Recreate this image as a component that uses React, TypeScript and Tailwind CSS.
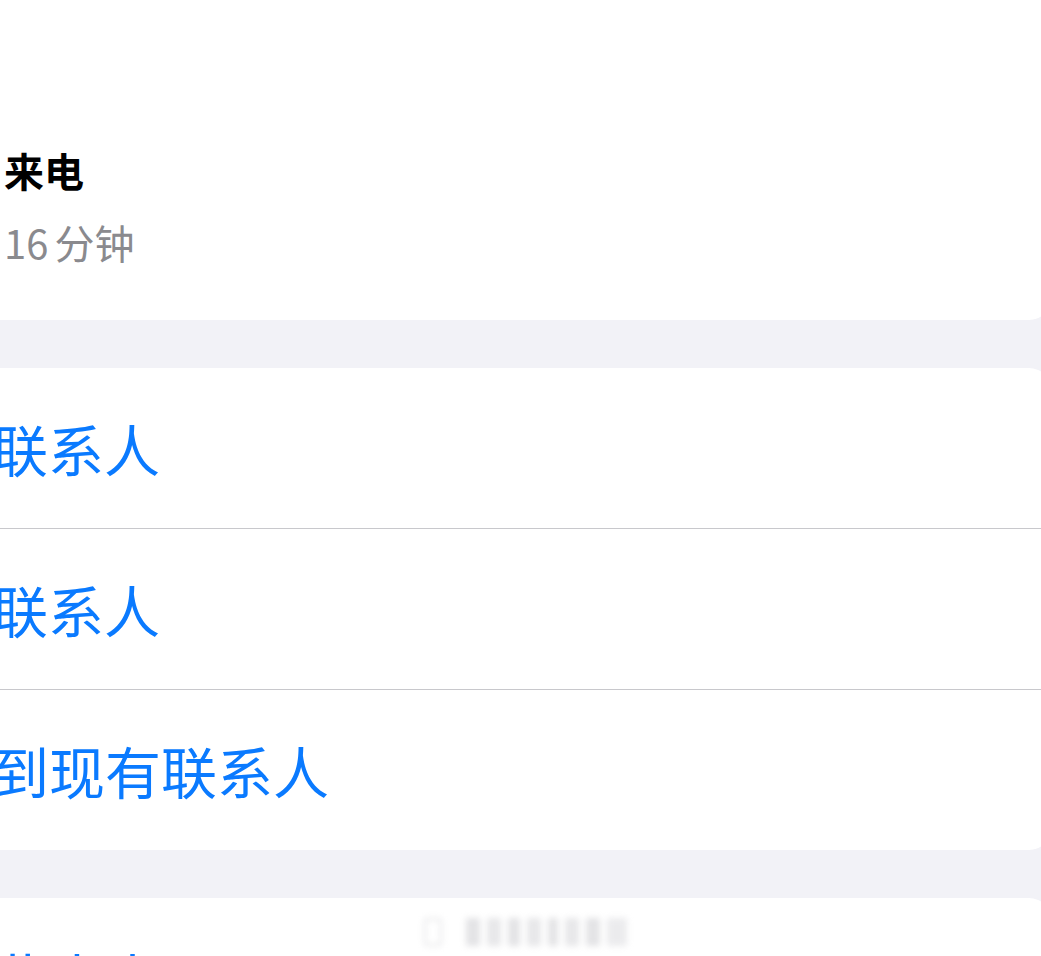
import React from "react";

const font = { fontFamily: '"Noto Sans CJK SC", "Noto Sans", sans-serif' };

function Row({ text, offset, last }: { text: string; offset: string; last?: boolean }) {
  return (
    <div className="flex flex-col">
      <div className="flex h-[160px] items-center whitespace-nowrap">
        <span className={`${offset} text-[56px] leading-[64px] text-[#0a7aff]`}>{text}</span>
      </div>
      {!last && <div className="h-px bg-[#c8c8cc]" />}
    </div>
  );
}

export default function App() {
  return (
    <div className="relative h-[956px] w-[1041px] overflow-hidden bg-[#f2f2f7]" style={font}>
      <div className="mr-[-10px] flex h-[320px] flex-col rounded-br-[22px] bg-white pt-[146px]">
        <div className="pl-[4px] text-[40px] font-bold leading-[48px] text-black">来电</div>
        <div className="mt-[24px] flex pl-[4px] text-[40px] leading-[48px] text-[#8a8a8e]">
          <span>16</span>
          <span className="ml-[6px]">分钟</span>
        </div>
      </div>
      <div className="h-[48px]" />
      <div className="mr-[-10px] flex flex-col rounded-r-[22px] bg-white">
        <Row text="创建新联系人" offset="ml-[-176px]" />
        <Row text="共享联系人" offset="ml-[-120px]" />
        <Row text="添加到现有联系人" offset="ml-[-119px]" last />
      </div>
      <div className="h-[48px]" />
      <div className="mr-[-10px] flex h-[200px] flex-col rounded-tr-[22px] bg-white">
        <div className="flex h-[158px] items-center whitespace-nowrap">
          <span className="ml-[-119px] text-[56px] leading-[64px] text-[#0a7aff]">阻止此来电号码</span>
        </div>
      </div>
      <div className="pointer-events-none absolute left-[424px] top-[918px] flex h-[28px] items-stretch gap-[7px] opacity-50 blur-[3px]">
        <div className="w-[18px] rounded-sm border-2 border-[#c8c8cc]" />
        <div className="w-[10px]" />
        <div className="w-[14px] bg-[#c8c8cc]" />
        <div className="w-[14px] bg-[#d0d0d4]" />
        <div className="w-[12px] bg-[#c8c8cc]" />
        <div className="w-[14px] bg-[#d0d0d4]" />
        <div className="w-[10px] bg-[#c8c8cc]" />
        <div className="w-[14px] bg-[#d0d0d4]" />
        <div className="w-[14px] bg-[#c8c8cc]" />
        <div className="w-[20px] bg-[#d8d8dc]" />
      </div>
    </div>
  );
}
